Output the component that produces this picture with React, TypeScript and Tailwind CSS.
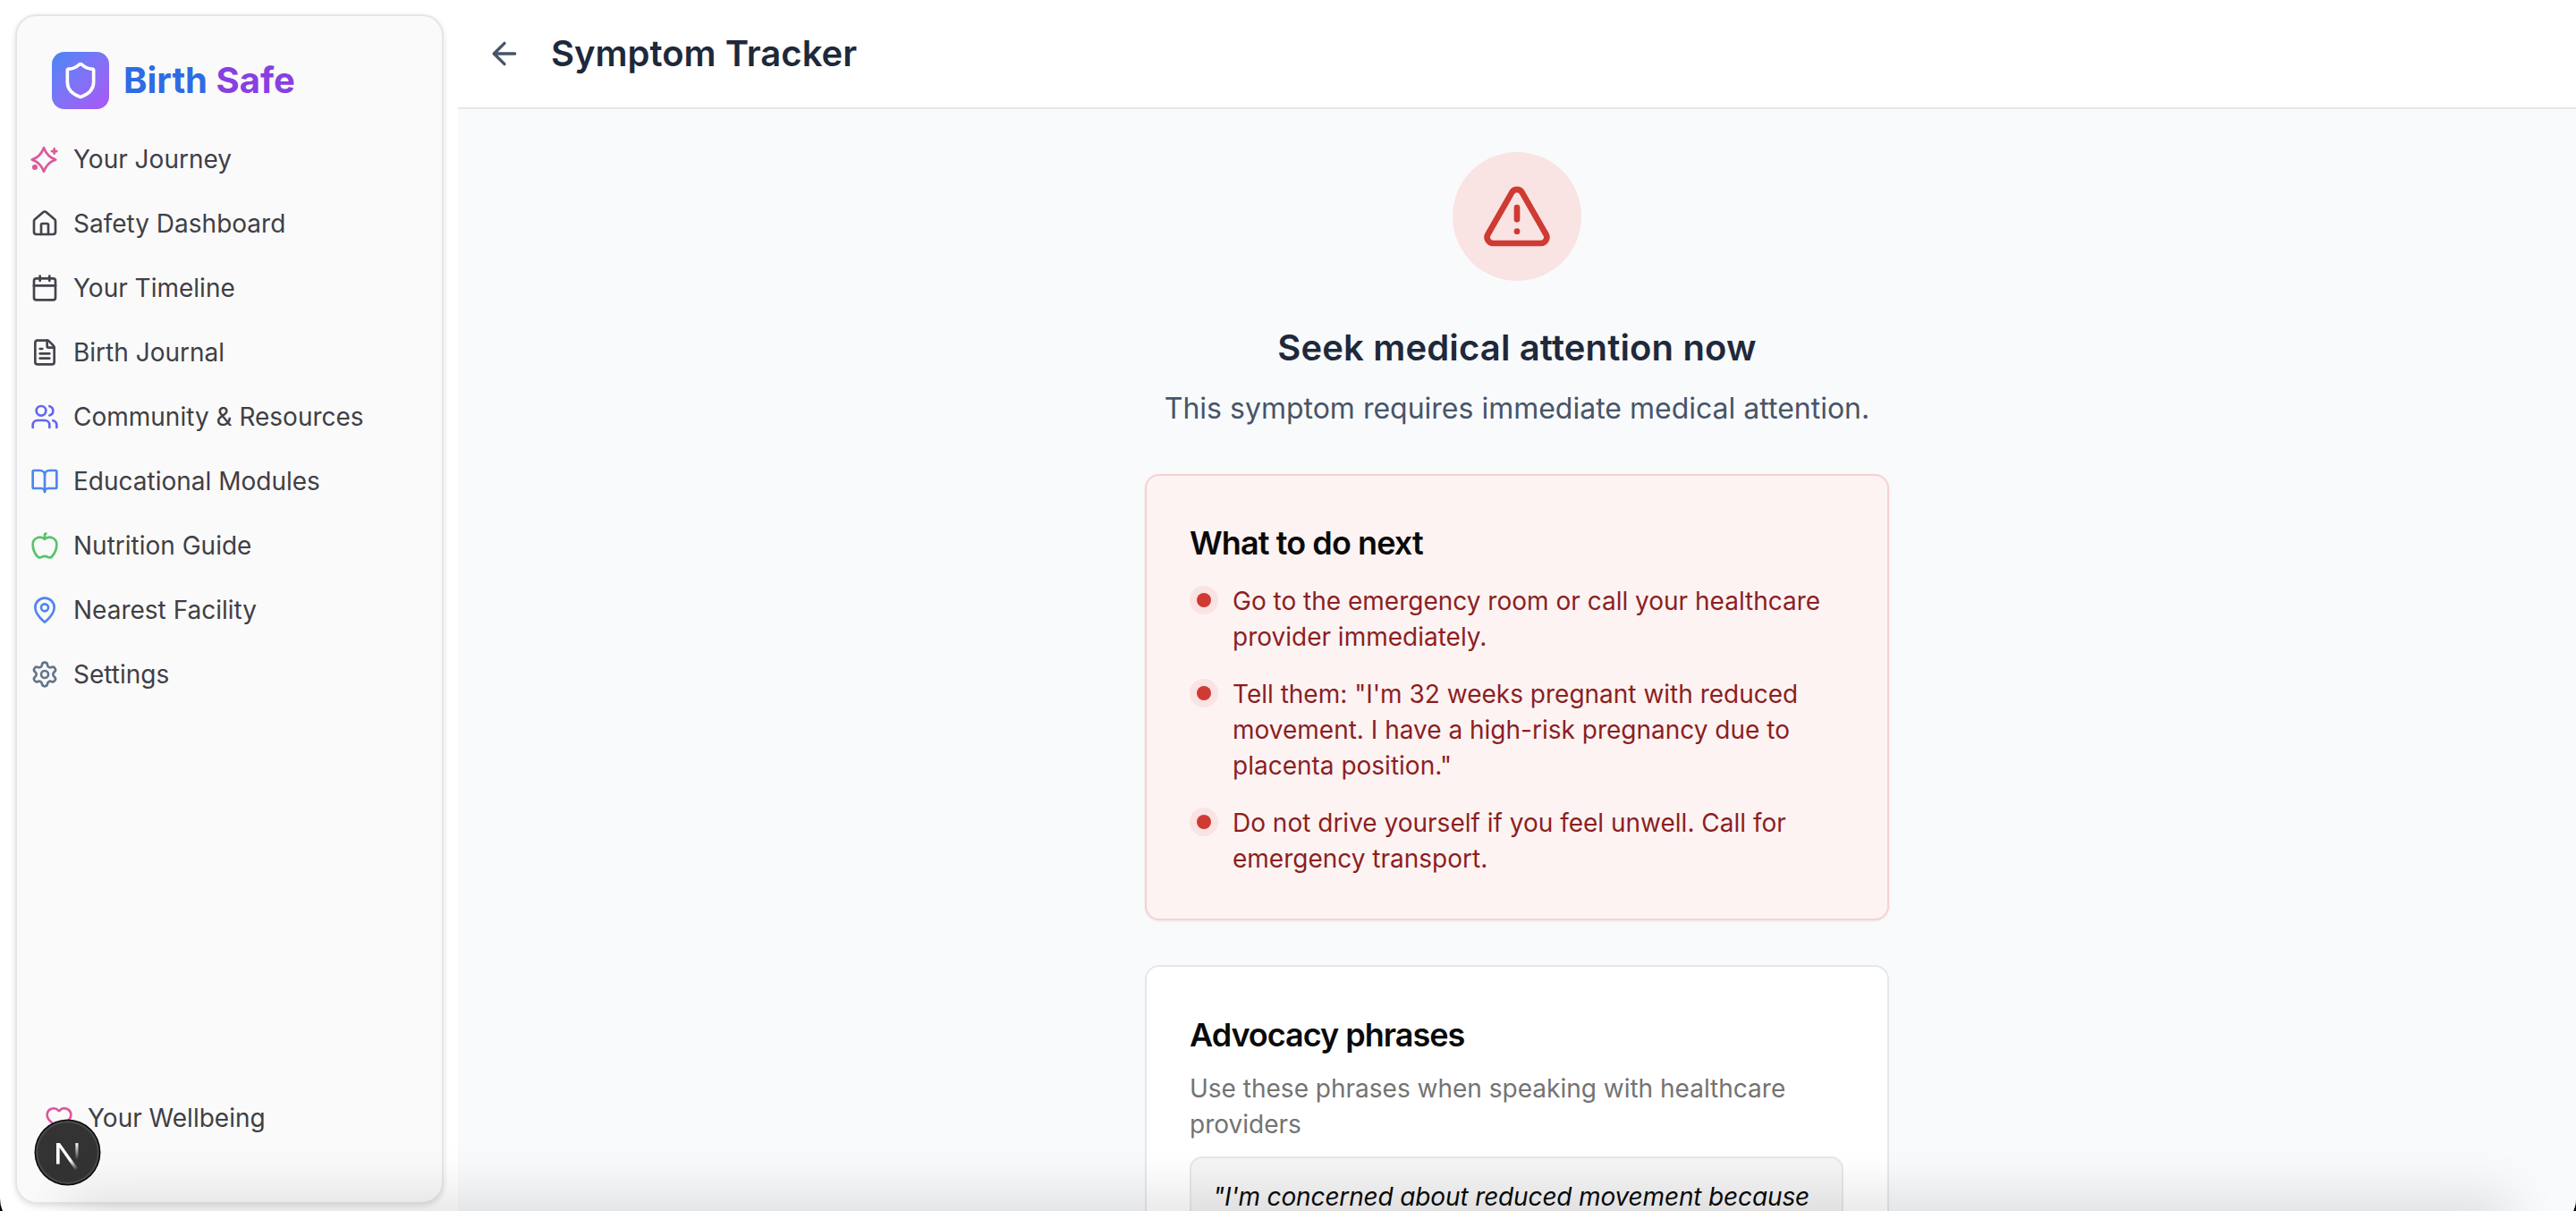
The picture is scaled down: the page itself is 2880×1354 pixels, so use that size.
import type { SVGProps } from "react"
import {
  Apple,
  ArrowLeft,
  BookOpen,
  Calendar,
  FileText,
  Heart,
  House,
  MapPin,
  Settings,
  Shield,
  TriangleAlert,
  Users,
} from "lucide-react"

// the star in the picture has a plus and a dot, lucide's current one doesn't
function SparkleStar(props: SVGProps<SVGSVGElement> & { strokeWidth?: number }) {
  return (
    <svg viewBox="0 0 24 24" fill="none" stroke="currentColor" strokeWidth={2} strokeLinecap="round" strokeLinejoin="round" {...props}>
      <path d="M11.250 2.400Q13.900 9.800 21.200 12.400Q13.900 15 11.250 22.400Q8.600 15 1.300 12.400Q8.600 9.800 11.250 2.400Z" />
      <path d="M20 3.300v4M18 5.300h4" />
      <circle cx="3.750" cy="18.750" r="1.300" fill="currentColor" />
    </svg>
  )
}

const navItems = [
  { label: "Your Journey", icon: SparkleStar, color: "text-[#db5a98]" },
  { label: "Safety Dashboard", icon: House, color: "text-[#44444e]" },
  { label: "Your Timeline", icon: Calendar, color: "text-[#44444e]" },
  { label: "Birth Journal", icon: FileText, color: "text-[#44444e]" },
  { label: "Community & Resources", icon: Users, color: "text-[#6366f1]" },
  { label: "Educational Modules", icon: BookOpen, color: "text-[#4f85f0]" },
  { label: "Nutrition Guide", icon: Apple, color: "text-[#57c26c]" },
  { label: "Nearest Facility", icon: MapPin, color: "text-[#4f85f0]" },
  { label: "Settings", icon: Settings, color: "text-[#64748b]" },
]

const nextSteps = [
  "Go to the emergency room or call your healthcare provider immediately.",
  "Tell them: \"I'm 32 weeks pregnant with reduced movement. I have a high-risk pregnancy due to placenta position.\"",
  "Do not drive yourself if you feel unwell. Call for emergency transport.",
]

function NextLogo() {
  return (
    <svg viewBox="0 0 72 72" className="w-full h-full">
      <defs>
        <linearGradient id="nDiag" x1="30" y1="32" x2="47" y2="54" gradientUnits="userSpaceOnUse">
          <stop offset="0.55" stopColor="#fff" />
          <stop offset="1" stopColor="#fff" stopOpacity="0" />
        </linearGradient>
        <linearGradient id="nBar" x1="46" y1="26" x2="46" y2="44" gradientUnits="userSpaceOnUse">
          <stop offset="0" stopColor="#fff" />
          <stop offset="1" stopColor="#fff" stopOpacity="0" />
        </linearGradient>
      </defs>
      <circle cx="36" cy="36" r="35.5" fill="#0a0a0a" />
      <circle cx="36" cy="36" r="34" fill="#4a4a4a" />
      <circle cx="36" cy="36" r="32" fill="#333333" />
      <path d="M24 26h3.500v22.500h-3.500z" fill="#fff" />
      <path d="M24 26h3.800l20 28-3.200 1.500z" fill="url(#nDiag)" />
      <path d="M44.500 26h3v18h-3z" fill="url(#nBar)" />
    </svg>
  )
}

function Sidebar() {
  return (
    <aside className="flex-none w-[479px] ml-[17px] mt-[16px] h-[1330px] rounded-[24px] border-2 border-[#e6e6ea] bg-[#fafafa] shadow-[0_2px_6px_rgba(0,0,0,0.12)] flex flex-col justify-between">
      <div>
        <div className="flex items-center gap-[16px] pl-[39px] pt-[40px] pb-[20px]">
          <div className="w-[64px] h-[64px] rounded-[14px] bg-gradient-to-br from-[#3f87f5] to-[#a855f7] flex items-center justify-center">
            <Shield className="w-[44px] h-[44px] text-white" strokeWidth={2} />
          </div>
          <span className="text-[40px] font-bold leading-none">
            <span className="text-[#2f6be4]">Birth</span> <span className="text-[#8840e0]">Safe</span>
          </span>
        </div>
        <nav className="flex flex-col">
          {navItems.map((item) => (
            <div key={item.label} className="flex items-center h-[72px] pl-[15px] gap-[16px]">
              <item.icon className={`w-[32px] h-[32px] flex-none ${item.color}`} strokeWidth={2} />
              <span className="text-[28px] leading-none text-[#3f3f46]">{item.label}</span>
            </div>
          ))}
        </nav>
      </div>
      <div className="flex items-center gap-[16px] pl-[31px] pb-[78px]">
        <Heart className="w-[32px] h-[32px] flex-none text-[#e0559c]" strokeWidth={2} />
        <span className="text-[28px] leading-none text-[#3f3f46]">Your Wellbeing</span>
      </div>
    </aside>
  )
}

export default function App() {
  return (
    <div className="h-[1354px] bg-black overflow-hidden" style={{ fontFamily: "Inter, sans-serif" }}>
      <div className="relative h-[1374px] w-full rounded-b-[34px] bg-white overflow-hidden flex">
        <Sidebar />
        <div className="flex-1 ml-[16px] flex flex-col min-w-0">
          <header className="flex-none h-[122px] bg-white border-b-2 border-[#e5e7eb] flex items-center pl-[32px] gap-[32px]">
            <ArrowLeft className="w-[40px] h-[40px] text-[#475569]" strokeWidth={2} />
            <h1 className="text-[40px] font-semibold text-[#1e293b]">Symptom Tracker</h1>
          </header>
          <main className="flex-1 bg-[#f9fafb] flex flex-col items-center pt-[48px] overflow-hidden">
            <div className="flex-none w-[144px] h-[144px] rounded-full bg-[#f9e3e3] flex items-center justify-center">
              <TriangleAlert className="w-[80px] h-[80px] text-[#cf3a32]" strokeWidth={2} />
            </div>
            <h2 className="mt-[53px] text-[40px] leading-[44px] font-semibold text-[#1e293b] tracking-[0.15px]">Seek medical attention now</h2>
            <p className="mt-[25px] text-[32px] leading-[42px] text-[#475569]">This symptom requires immediate medical attention.</p>

            <section className="flex-none mt-[52px] w-[832px] rounded-[16px] border-2 border-[#f9d0d0] bg-[#fdf3f3] shadow-[0_1px_3px_rgba(0,0,0,0.08)] pl-[48px] pr-[49px] pt-[55px] pb-[47px]">
              <h3 className="text-[36px] leading-[40px] font-semibold text-[#0a0a0a] tracking-[-0.9px]">What to do next</h3>
              <ul className="mt-[25px] flex flex-col gap-[24px]">
                {nextSteps.map((step) => (
                  <li key={step} className="flex gap-[16px]">
                    <span className="flex-none mt-[3px] w-[32px] h-[32px] rounded-full bg-[#f9e3e3] flex items-center justify-center">
                      <span className="w-[16px] h-[16px] rounded-full bg-[#cf3a32]" />
                    </span>
                    <span className="text-[28px] leading-[40px] text-[#8c1f1f]">{step}</span>
                  </li>
                ))}
              </ul>
            </section>

            <section className="flex-none mt-[50px] w-[832px] rounded-[16px] border-2 border-[#e5e7eb] bg-white pl-[48px] pr-[49px] pt-[56px]">
              <h3 className="text-[36px] leading-[40px] font-semibold text-[#0a0a0a] tracking-[-1px]">Advocacy phrases</h3>
              <p className="mt-[20px] text-[28px] leading-[40px] text-[#737373]">Use these phrases when speaking with healthcare providers</p>
              <div className="mt-[16px] rounded-[14px] border-2 border-[#e5e7eb] bg-[#f5f5f6] px-[24px] pt-[23px] pb-[24px]">
                <p className="text-[28px] leading-[40px] italic text-[#0a0a0a] tracking-[-0.15px]">"I'm concerned about reduced movement because</p>
              </div>
            </section>
          </main>
        </div>

        <div className="absolute left-[38px] top-[1251px] w-[75px] h-[75px]">
          <NextLogo />
        </div>

        {/* soft shadow creeping in from under the window */}
        <div className="absolute left-[100px] right-[100px] top-[1364px] h-[10px] pointer-events-none shadow-[0_0_60px_26px_rgba(0,0,0,0.12)]" />
      </div>
    </div>
  )
}
